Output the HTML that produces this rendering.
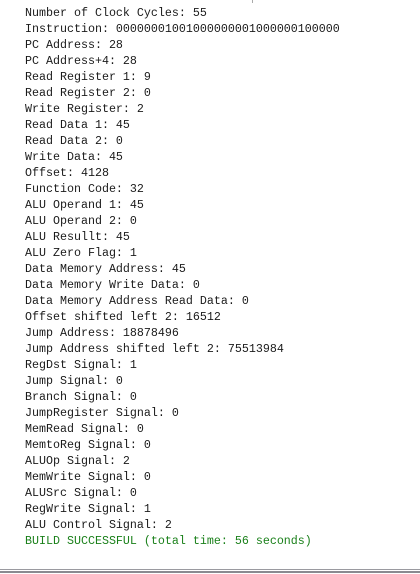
<!DOCTYPE html>
<html><head><style>
html,body{margin:0;padding:0;background:#fff;width:420px;height:574px;overflow:hidden;position:relative}
pre{margin:0;position:absolute;left:25px;top:5px;font-family:"Liberation Mono",monospace;font-size:11.67px;line-height:16px;color:#1a1a1a}
.g{color:#1a801a}
.tick{position:absolute;left:252px;top:0;width:1px;height:3px;background:#aaa}
.b1{position:absolute;left:0;top:569px;width:420px;height:1px;background:#9a9aa0}
.b2{position:absolute;left:0;top:571px;width:420px;height:2px;background:#8a8a90}
</style></head><body>
<div class="tick"></div>
<pre>Number of Clock Cycles: 55
Instruction: 00000001001000000001000000100000
PC Address: 28
PC Address+4: 28
Read Register 1: 9
Read Register 2: 0
Write Register: 2
Read Data 1: 45
Read Data 2: 0
Write Data: 45
Offset: 4128
Function Code: 32
ALU Operand 1: 45
ALU Operand 2: 0
ALU Resullt: 45
ALU Zero Flag: 1
Data Memory Address: 45
Data Memory Write Data: 0
Data Memory Address Read Data: 0
Offset shifted left 2: 16512
Jump Address: 18878496
Jump Address shifted left 2: 75513984
RegDst Signal: 1
Jump Signal: 0
Branch Signal: 0
JumpRegister Signal: 0
MemRead Signal: 0
MemtoReg Signal: 0
ALUOp Signal: 2
MemWrite Signal: 0
ALUSrc Signal: 0
RegWrite Signal: 1
ALU Control Signal: 2
<span class="g">BUILD SUCCESSFUL (total time: 56 seconds)</span></pre>
<div class="b1"></div><div class="b2"></div>
</body></html>
